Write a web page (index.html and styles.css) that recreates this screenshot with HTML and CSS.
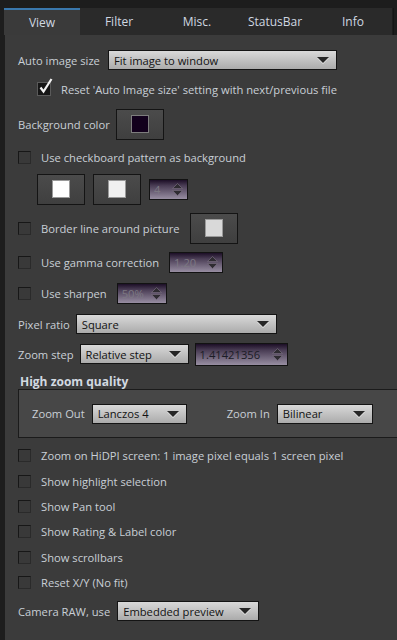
FILE: index.html
```html
<!DOCTYPE html>
<html lang="en">
<head>
    <meta charset="UTF-8">
    <meta name="viewport" content="width=device-width, initial-scale=1.0">
    <title>Settings - View</title>
    <link rel="stylesheet" href="styles.css">
</head>
<body>
    <div class="tabs">
        <div class="tab active">View</div>
        <div class="tab">Filter</div>
        <div class="tab">Misc.</div>
        <div class="tab">StatusBar</div>
        <div class="tab">Info</div>
        <div class="tab-end"></div>
    </div>

    <div class="panel">
        <div class="row r-auto">
            <span class="label">Auto image size</span>
            <div class="combo w-fit">Fit image to window<span class="arrow"></span></div>
        </div>

        <div class="row r-reset indent">
            <span class="check checked">
                <svg width="16" height="18" viewBox="0 0 16 18"><path d="M2.5 10.5 L5.5 14.5 L13.5 2" fill="none" stroke="#f2f2f2" stroke-width="2.2"/></svg>
            </span>
            <span class="label">Reset 'Auto Image size' setting with next/previous file</span>
        </div>

        <div class="row r-bg">
            <span class="label">Background color</span>
            <div class="color-btn"><span class="swatch sw-dark"></span></div>
        </div>

        <div class="row r-board">
            <span class="check"></span>
            <span class="label">Use checkboard pattern as background</span>
        </div>

        <div class="row r-boardcolors indent">
            <div class="color-btn"><span class="swatch sw-white"></span></div>
            <div class="color-btn"><span class="swatch sw-offwhite"></span></div>
            <div class="spin off w-4">4<svg class="updown" width="11" height="13" viewBox="0 0 11 13"><path d="M0.5 5.5 L5.5 0.5 L10.5 5.5 Z M0.5 7.5 L10.5 7.5 L5.5 12.5 Z" fill="#2f2c32" stroke="#7d7285" stroke-width="0.6"/></svg></div>
        </div>

        <div class="row r-border">
            <span class="check"></span>
            <span class="label">Border line around picture</span>
            <div class="color-btn"><span class="swatch sw-gray"></span></div>
        </div>

        <div class="row r-gamma">
            <span class="check"></span>
            <span class="label">Use gamma correction</span>
            <div class="spin off w-gamma">1.20<svg class="updown" width="11" height="13" viewBox="0 0 11 13"><path d="M0.5 5.5 L5.5 0.5 L10.5 5.5 Z M0.5 7.5 L10.5 7.5 L5.5 12.5 Z" fill="#2f2c32" stroke="#7d7285" stroke-width="0.6"/></svg></div>
        </div>

        <div class="row r-sharpen">
            <span class="check"></span>
            <span class="label">Use sharpen</span>
            <div class="spin off w-sharpen">50%<svg class="updown" width="11" height="13" viewBox="0 0 11 13"><path d="M0.5 5.5 L5.5 0.5 L10.5 5.5 Z M0.5 7.5 L10.5 7.5 L5.5 12.5 Z" fill="#2f2c32" stroke="#7d7285" stroke-width="0.6"/></svg></div>
        </div>

        <div class="row r-pixel">
            <span class="label">Pixel ratio</span>
            <div class="combo w-square">Square<span class="arrow"></span></div>
        </div>

        <div class="row r-zoomstep">
            <span class="label">Zoom step</span>
            <div class="combo w-relative">Relative step<span class="arrow"></span></div>
            <div class="spin w-step">1.41421356<svg class="updown" width="11" height="13" viewBox="0 0 11 13"><path d="M0.5 5.5 L5.5 0.5 L10.5 5.5 Z M0.5 7.5 L10.5 7.5 L5.5 12.5 Z" fill="#2f2c32" stroke="#7d7285" stroke-width="0.6"/></svg></div>
        </div>

        <div class="group-title">High zoom quality</div>
        <div class="group">
            <span class="label">Zoom Out</span>
            <div class="combo w-lanczos">Lanczos 4<span class="arrow"></span></div>
            <span class="label zoom-in">Zoom In</span>
            <div class="combo w-bilinear">Bilinear<span class="arrow"></span></div>
        </div>

        <div class="checks">
            <div class="row-sm"><span class="check"></span><span class="label">Zoom on HiDPI screen: 1 image pixel equals 1 screen pixel</span></div>
            <div class="row-sm"><span class="check"></span><span class="label">Show highlight selection</span></div>
            <div class="row-sm"><span class="check"></span><span class="label">Show Pan tool</span></div>
            <div class="row-sm"><span class="check"></span><span class="label">Show Rating &amp; Label color</span></div>
            <div class="row-sm"><span class="check"></span><span class="label">Show scrollbars</span></div>
            <div class="row-sm"><span class="check"></span><span class="label">Reset X/Y (No fit)</span></div>
        </div>

        <div class="row r-raw">
            <span class="label">Camera RAW, use</span>
            <div class="combo w-raw">Embedded preview<span class="arrow"></span></div>
        </div>
    </div>
</body>
</html>
```

FILE: styles.css
```css
body {
    margin: 0;
    background-color: #1d1d1d;
    font-family: "Open Sans", "Noto Sans", sans-serif;
    font-size: 11.2px;
    color: #c9cfd6;
    width: 397px;
    height: 640px;
    overflow: hidden;
}
.tabs {
    display: flex;
    margin-top: 8px;
    margin-left: 4px;
    height: 27px;
}
.tab {
    width: 78px;
    display: flex;
    align-items: center;
    justify-content: center;
    background-color: #2a2a2a;
    color: #d0d8e1;
    font-size: 12px;
}
.tab.active {
    width: 76px;
    background-color: #3a3a3a;
    border-top: 2px solid #3a78ad;
    box-sizing: border-box;
}
.tab-end {
    width: 1px;
    background-color: #151515;
    margin-left: 1px;
}
.panel {
    margin-left: 5px;
    background-color: #3b3b3b;
    height: 605px;
    padding-left: 13px;
    padding-top: 12px;
    box-sizing: border-box;
    overflow: hidden;
}
.row {
    display: flex;
    align-items: center;
    height: 26px;
    gap: 8px;
}
.indent {
    padding-left: 19px;
}
.r-reset { margin-top: 3px; gap: 10px; }
.r-bg { margin-top: 9px; gap: 6px; }
.r-board { margin-top: 7px; gap: 10px; }
.r-boardcolors { margin-top: 6px; }
.r-border { margin-top: 13px; gap: 10px; }
.r-gamma { margin-top: 8px; gap: 10px; }
.r-sharpen { margin-top: 5px; gap: 10px; }
.r-pixel { margin-top: 5px; gap: 6px; }
.r-zoomstep { margin-top: 4px; gap: 6px; }
.r-raw { margin-top: 3px; gap: 7px; }

.check {
    width: 11px;
    height: 11px;
    border: 1px solid #171717;
    border-right-color: #2a2a2a;
    border-bottom-color: #2a2a2a;
    background-color: #393939;
    flex: none;
    position: relative;
}
.check.checked {
    width: 12px;
    height: 12px;
    background-color: #161616;
    border-color: #5a5a5a;
}
.check svg {
    position: absolute;
    left: 0;
    top: -6px;
}

.combo {
    display: flex;
    align-items: center;
    height: 18px;
    padding-left: 5px;
    padding-right: 7px;
    border: 1px solid #141414;
    background: linear-gradient(#d9d9d9, #ababab);
    color: #121212;
}
.arrow {
    margin-left: auto;
    width: 0;
    height: 0;
    border-left: 6px solid transparent;
    border-right: 6px solid transparent;
    border-top: 6px solid #262626;
    filter: drop-shadow(0 1px 0 #e8e8e8);
}
.w-fit { width: 215px; }
.w-square { width: 187px; }
.w-relative { width: 95px; }
.w-lanczos { width: 81px; }
.w-bilinear { width: 82px; }
.w-raw { width: 128px; }

.spin {
    display: flex;
    align-items: center;
    height: 19px;
    padding-left: 4px;
    padding-right: 4px;
    border: 1px solid #121212;
    background: linear-gradient(#1c0e26, #4a3d55 30%, #988ea2);
    color: #1c1c26;
}
.spin.off {
    color: #7c7882;
}
.updown {
    margin-left: auto;
    flex: none;
}
.w-4 { width: 29px; }
.w-gamma { width: 44px; }
.w-sharpen { width: 40px; }
.w-step { width: 83px; height: 21px; }

.color-btn {
    width: 46px;
    height: 29px;
    border: 1px solid #141414;
    background: linear-gradient(#4b4b4b, #3f3f3f);
    display: flex;
    align-items: center;
    justify-content: center;
    flex: none;
}
.swatch {
    width: 16px;
    height: 16px;
    border: 1px solid #7d7d7d;
}
.sw-dark { background-color: #12001c; }
.sw-white { background-color: #ffffff; border-color: #9a9a9a; }
.sw-offwhite { background-color: #f0f0f0; border-color: #9a9a9a; }
.sw-gray { background-color: #d9d9d9; border-color: #9a9a9a; }

.group-title {
    margin-top: 7px;
    margin-left: 2px;
    height: 15px;
    line-height: 15px;
    font-weight: bold;
    font-size: 12px;
    color: #d2d9e1;
}
.group {
    display: flex;
    align-items: center;
    width: 420px;
    height: 47px;
    border: 1px solid #1b1b1b;
    background-color: #474747;
    padding-left: 13px;
    gap: 7px;
}
.zoom-in {
    margin-left: 33px;
}

.checks {
    margin-top: 5px;
}
.row-sm {
    display: flex;
    align-items: center;
    height: 25.4px;
    gap: 10px;
}
```
